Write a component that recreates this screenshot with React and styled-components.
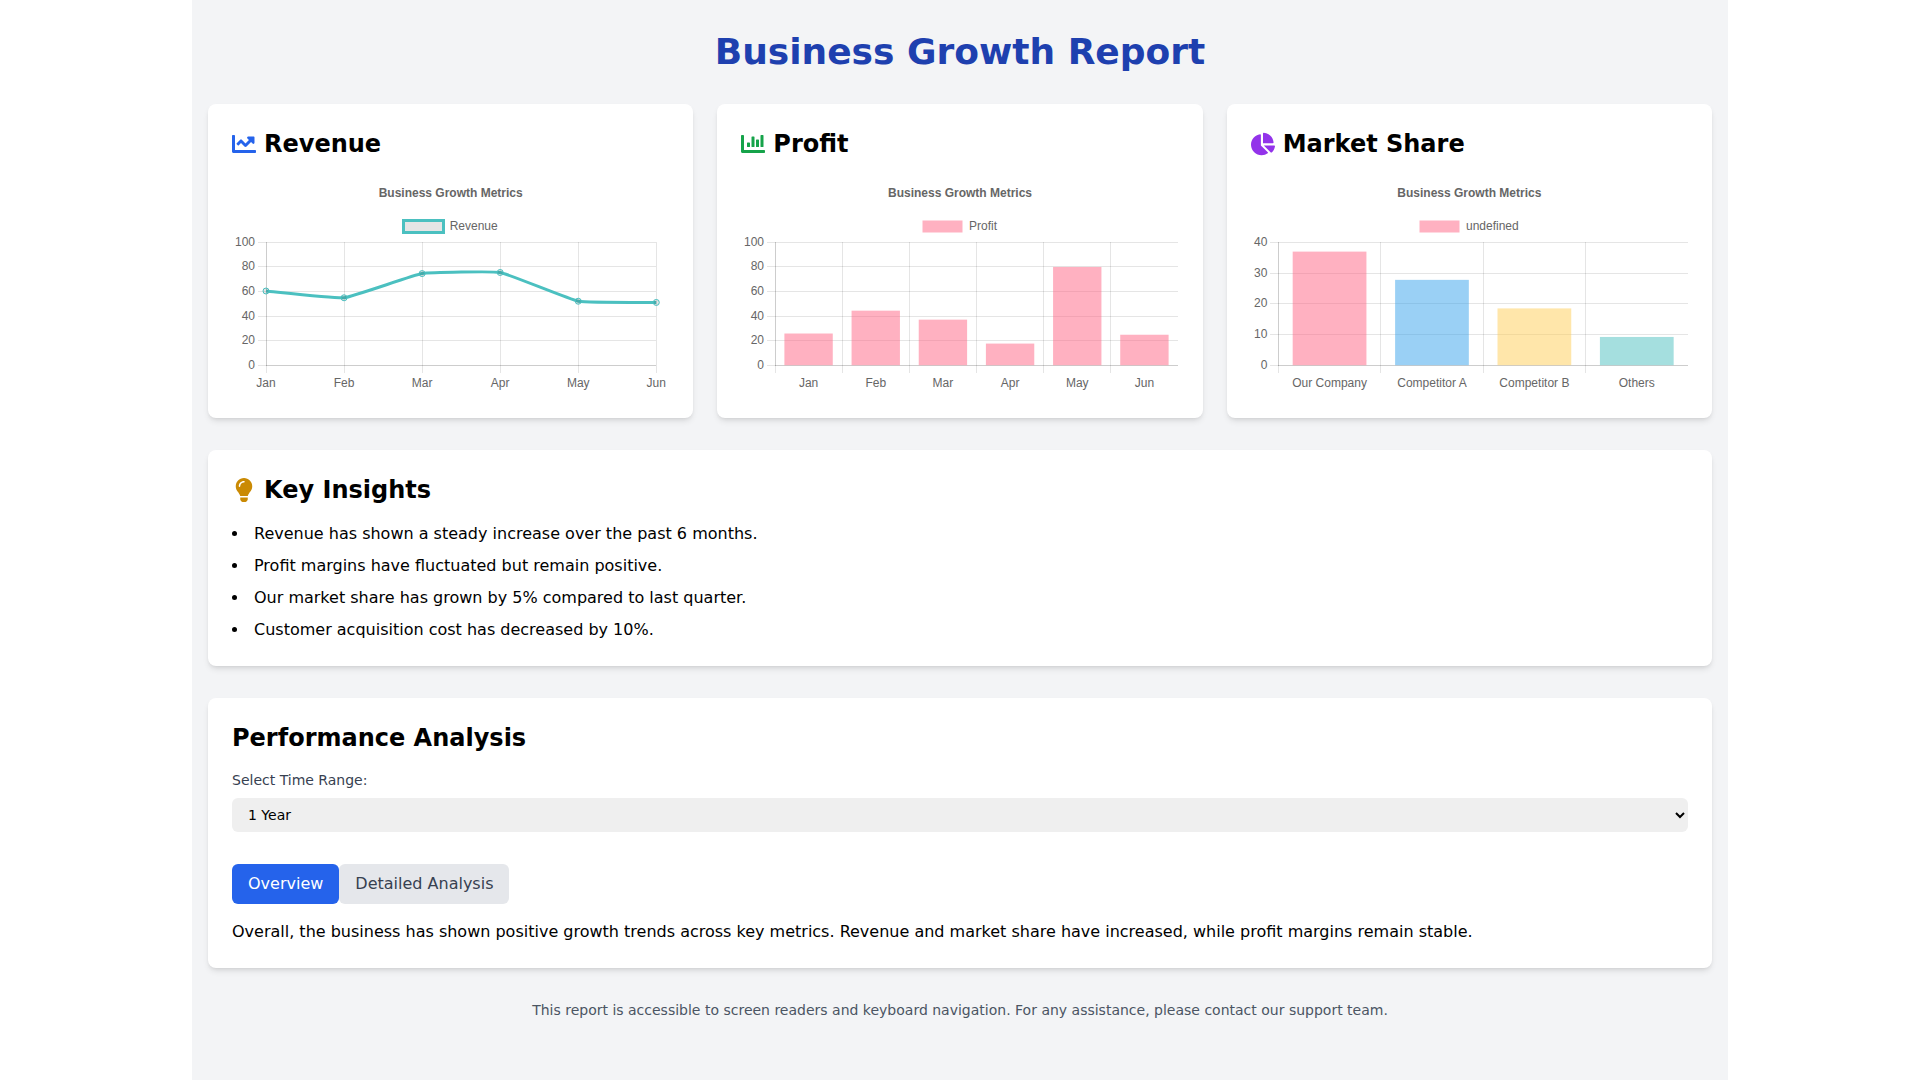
import React, { useLayoutEffect, useRef, useState } from "react";
import styled, { createGlobalStyle } from "styled-components";
import { FaChartBar, FaChartLine, FaChartPie, FaLightbulb } from "react-icons/fa";

const GlobalStyle = createGlobalStyle`
    *, *::before, *::after {
        box-sizing: border-box;
    }
    body {
        margin: 0;
        background-color: #fff;
        color: #000;
        font-family: "DejaVu Sans", sans-serif;
        font-size: 16px;
        line-height: 24px;
    }
    h1, h2, p, ul, figure {
        margin: 0;
        padding: 0;
    }
`;

const Page = styled.div`
    max-width: 1536px;
    min-height: 100vh;
    margin: 0 auto;
    padding: 32px 16px;
    background-color: #f3f4f6;
`;

const PageTitle = styled.h1`
    margin-bottom: 32px;
    color: #1e40af;
    font-size: 36px;
    line-height: 40px;
    text-align: center;
`;

const Metrics = styled.div`
    display: grid;
    grid-template-columns: 1fr;
    gap: 24px;

    @media (min-width: 768px) {
        grid-template-columns: repeat(2, minmax(0, 1fr));
    }
    @media (min-width: 1024px) {
        grid-template-columns: repeat(3, minmax(0, 1fr));
    }
`;

const Card = styled.section`
    padding: 24px;
    background-color: #fff;
    border-radius: 8px;
    box-shadow: 0 4px 6px -1px rgba(0, 0, 0, .1), 0 2px 4px -2px rgba(0, 0, 0, .1);
`;

const WideCard = styled(Card)`
    margin-top: 32px;
`;

const CardTitle = styled.h2`
    display: flex;
    align-items: center;
    gap: 8px;
    margin-bottom: 16px;
    font-size: 24px;
    line-height: 32px;

    svg {
        color: ${({ $iconColor }) => $iconColor || "inherit"};
    }
`;

const ChartFigure = styled.figure`
    display: flex;
    flex-direction: column;
    aspect-ratio: 437 / 218;
    color: #666;
    font-family: "Liberation Sans", Arial, sans-serif;
    font-size: 12px;
    line-height: 14px;
`;

const ChartTitle = styled.figcaption`
    flex: none;
    padding: 10px;
    font-weight: bold;
    text-align: center;
`;

const Legend = styled.div`
    flex: none;
    display: flex;
    align-items: center;
    justify-content: center;
    gap: 6px;
    height: 32px;
`;

const Swatch = styled.svg`
    display: block;
    overflow: visible;
`;

const PlotArea = styled.div`
    flex: 1;
    min-height: 0;
    min-width: 0;
`;

const Plot = styled.svg`
    display: block;
    overflow: visible;

    text {
        fill: #666;
    }
    line {
        stroke: rgba(0, 0, 0, .1);
        shape-rendering: crispEdges;
    }
`;

const InsightList = styled.ul`
    display: flex;
    flex-direction: column;
    gap: 8px;
    list-style: disc inside;
`;

const FieldLabel = styled.label`
    display: block;
    margin-bottom: 8px;
    color: #374151;
    font-size: 14px;
    line-height: 20px;
`;

const Select = styled.select`
    display: block;
    width: 100%;
    height: 34px;
    padding: 8px 12px;
    border: 0;
    border-radius: 6px;
    background-color: #efefef;
    color: #000;
    font-family: inherit;
    font-size: 14px;
`;

const Tabs = styled.div`
    display: flex;
    margin: 32px 0 16px;
`;

const Tab = styled.button`
    padding: 8px 16px;
    border: 0;
    border-radius: 6px;
    background-color: ${({ $active }) => ($active ? "#2563eb" : "#e5e7eb")};
    color: ${({ $active }) => ($active ? "#fff" : "#374151")};
    font-family: inherit;
    font-size: 16px;
    line-height: 24px;
    cursor: pointer;
`;

const Footer = styled.footer`
    margin-top: 32px;
    color: #4b5563;
    font-size: 14px;
    line-height: 20px;
    text-align: center;
`;

const TEAL = "rgb(75, 192, 192)";
const PINK = "rgba(255, 99, 132, .5)";
const MONTHS = ["Jan", "Feb", "Mar", "Apr", "May", "Jun"];

const revenue = {
    label: "Revenue",
    labels: MONTHS,
    values: [60.4, 54.9, 74.6, 75.5, 52.1, 51.1],
    max: 100,
    step: 20,
};

const profit = {
    label: "Profit",
    labels: MONTHS,
    values: [25.8, 44.4, 37.1, 17.6, 80, 24.8],
    colors: [PINK],
    max: 100,
    step: 20,
};

const marketShare = {
    label: "undefined",
    labels: ["Our Company", "Competitor A", "Competitor B", "Others"],
    values: [37, 27.8, 18.5, 9.2],
    colors: [PINK, "rgba(54, 162, 235, .5)", "rgba(255, 206, 86, .5)", "rgba(75, 192, 192, .5)"],
    max: 40,
    step: 10,
};

const insights = [
    "Revenue has shown a steady increase over the past 6 months.",
    "Profit margins have fluctuated but remain positive.",
    "Our market share has grown by 5% compared to last quarter.",
    "Customer acquisition cost has decreased by 10%.",
];

const analysis = {
    overview: "Overall, the business has shown positive growth trends across key metrics. Revenue and market share have increased, while profit margins remain stable.",
    detailed: "Detailed analysis shows that revenue peaked in April, while profit was strongest in May.",
};

const useSize = () => {
    const ref = useRef(null);
    const [size, setSize] = useState({ width: 0, height: 0 });

    useLayoutEffect(() => {
        const measure = () => {
            const rect = ref.current.getBoundingClientRect();
            setSize({ width: Math.floor(rect.width), height: Math.floor(rect.height) });
        };
        measure();
        const observer = new ResizeObserver(measure);
        observer.observe(ref.current);
        return () => observer.disconnect();
    }, []);

    return [ref, size];
};

// Smooth line, control points follow the neighbours of each point
const linePath = (points, tension = 0.1) => {
    const control = points.map((p, i) => {
        const prev = points[i - 1] || p;
        const next = points[i + 1] || p;
        const before = Math.hypot(p.x - prev.x, p.y - prev.y);
        const after = Math.hypot(next.x - p.x, next.y - p.y);
        const a = (tension * before) / (before + after);
        const b = (tension * after) / (before + after);
        return {
            inX: p.x - a * (next.x - prev.x),
            inY: p.y - a * (next.y - prev.y),
            outX: p.x + b * (next.x - prev.x),
            outY: p.y + b * (next.y - prev.y),
        };
    });
    return points
        .map((p, i) => {
            if (i === 0) return `M${p.x} ${p.y}`;
            const from = control[i - 1];
            const to = control[i];
            return `C${from.outX} ${from.outY} ${to.inX} ${to.inY} ${p.x} ${p.y}`;
        })
        .join(" ");
};

const Chart = ({ type, data }) => {
    const [ref, { width, height }] = useSize();
    const { labels, values, colors, max, step } = data;
    const isLine = type === "line";

    const left = max >= 100 ? 34 : 27.35;
    const right = isLine ? width - 12.7 : width;
    const top = 0.4;
    const bottom = height - 28.8;
    const slot = (right - left) / (isLine ? labels.length - 1 : labels.length);
    const yOf = (value) => bottom - (value / max) * (bottom - top);
    const crisp = (n) => Math.floor(n) + 0.5;
    const center = (i) => left + slot * (isLine ? i : i + 0.5);

    const ticks = [];
    for (let value = 0; value <= max; value += step) ticks.push(value);
    const points = values.map((value, i) => ({ x: center(i), y: yOf(value) }));
    const barWidth = slot * 0.72;

    return (
        <ChartFigure>
            <ChartTitle>Business Growth Metrics</ChartTitle>
            <Legend>
                <Swatch width="40" height="12" aria-hidden="true">
                    <rect
                        x="-0.5"
                        y="0.5"
                        width="40"
                        height="12"
                        fill={isLine ? "rgba(0, 0, 0, .1)" : colors[0]}
                        stroke={isLine ? TEAL : "none"}
                        strokeWidth="3"
                    />
                </Swatch>
                <span>{data.label}</span>
            </Legend>
            <PlotArea ref={ref}>
                {width > 0 && (
                    <Plot width={width} height={height} role="img" aria-label={`${data.label} chart`}>
                        {ticks.map((value) => (
                            <g key={value}>
                                <line x1={Math.floor(left) - 8} x2={Math.floor(right)} y1={crisp(yOf(value))} y2={crisp(yOf(value))} />
                                <text x={left - 11} y={Math.floor(yOf(value)) + 4} textAnchor="end">{value}</text>
                            </g>
                        ))}
                        {labels.map((label, i) => (
                            <g key={label}>
                                <line x1={crisp(left + slot * i)} x2={crisp(left + slot * i)} y1="0" y2={Math.floor(bottom) + 8} />
                                <text x={center(i)} y={Math.floor(bottom) + 22} textAnchor="middle">{label}</text>
                            </g>
                        ))}
                        <line x1={crisp(left)} x2={crisp(left)} y1="0" y2={Math.floor(bottom) + 1} />
                        <line x1={Math.floor(left)} x2={Math.floor(right)} y1={crisp(bottom)} y2={crisp(bottom)} />
                        {isLine ? (
                            <>
                                <path d={linePath(points)} fill="none" stroke={TEAL} strokeWidth="3" />
                                {points.map((p) => (
                                    <circle key={p.x} cx={p.x} cy={p.y} r="3" fill="rgba(0, 0, 0, .1)" stroke={TEAL} />
                                ))}
                            </>
                        ) : (
                            points.map((p, i) => (
                                <rect
                                    key={labels[i]}
                                    x={p.x - barWidth / 2}
                                    y={p.y}
                                    width={barWidth}
                                    height={bottom - p.y}
                                    fill={colors[i % colors.length]}
                                />
                            ))
                        )}
                    </Plot>
                )}
            </PlotArea>
        </ChartFigure>
    );
};

const App = () => {
    const [range, setRange] = useState("1year");
    const [tab, setTab] = useState("overview");

    return (
        <>
            <GlobalStyle />
            <Page>
                <PageTitle>Business Growth Report</PageTitle>
                <Metrics>
                    <Card>
                        <CardTitle $iconColor="#2563eb"><FaChartLine />Revenue</CardTitle>
                        <Chart type="line" data={revenue} />
                    </Card>
                    <Card>
                        <CardTitle $iconColor="#16a34a"><FaChartBar />Profit</CardTitle>
                        <Chart type="bar" data={profit} />
                    </Card>
                    <Card>
                        <CardTitle $iconColor="#9333ea"><FaChartPie />Market Share</CardTitle>
                        <Chart type="bar" data={marketShare} />
                    </Card>
                </Metrics>
                <WideCard>
                    <CardTitle $iconColor="#ca8a04"><FaLightbulb />Key Insights</CardTitle>
                    <InsightList>
                        {insights.map((text) => <li key={text}>{text}</li>)}
                    </InsightList>
                </WideCard>
                <WideCard>
                    <CardTitle>Performance Analysis</CardTitle>
                    <FieldLabel htmlFor="time-range">Select Time Range:</FieldLabel>
                    <Select id="time-range" value={range} onChange={(e) => setRange(e.target.value)}>
                        <option value="3months">3 Months</option>
                        <option value="6months">6 Months</option>
                        <option value="1year">1 Year</option>
                    </Select>
                    <Tabs>
                        <Tab type="button" $active={tab === "overview"} onClick={() => setTab("overview")}>Overview</Tab>
                        <Tab type="button" $active={tab === "detailed"} onClick={() => setTab("detailed")}>Detailed Analysis</Tab>
                    </Tabs>
                    <p>{analysis[tab]}</p>
                </WideCard>
                <Footer>
                    <p>This report is accessible to screen readers and keyboard navigation. For any assistance, please contact our support team.</p>
                </Footer>
            </Page>
        </>
    );
};

export default App;
